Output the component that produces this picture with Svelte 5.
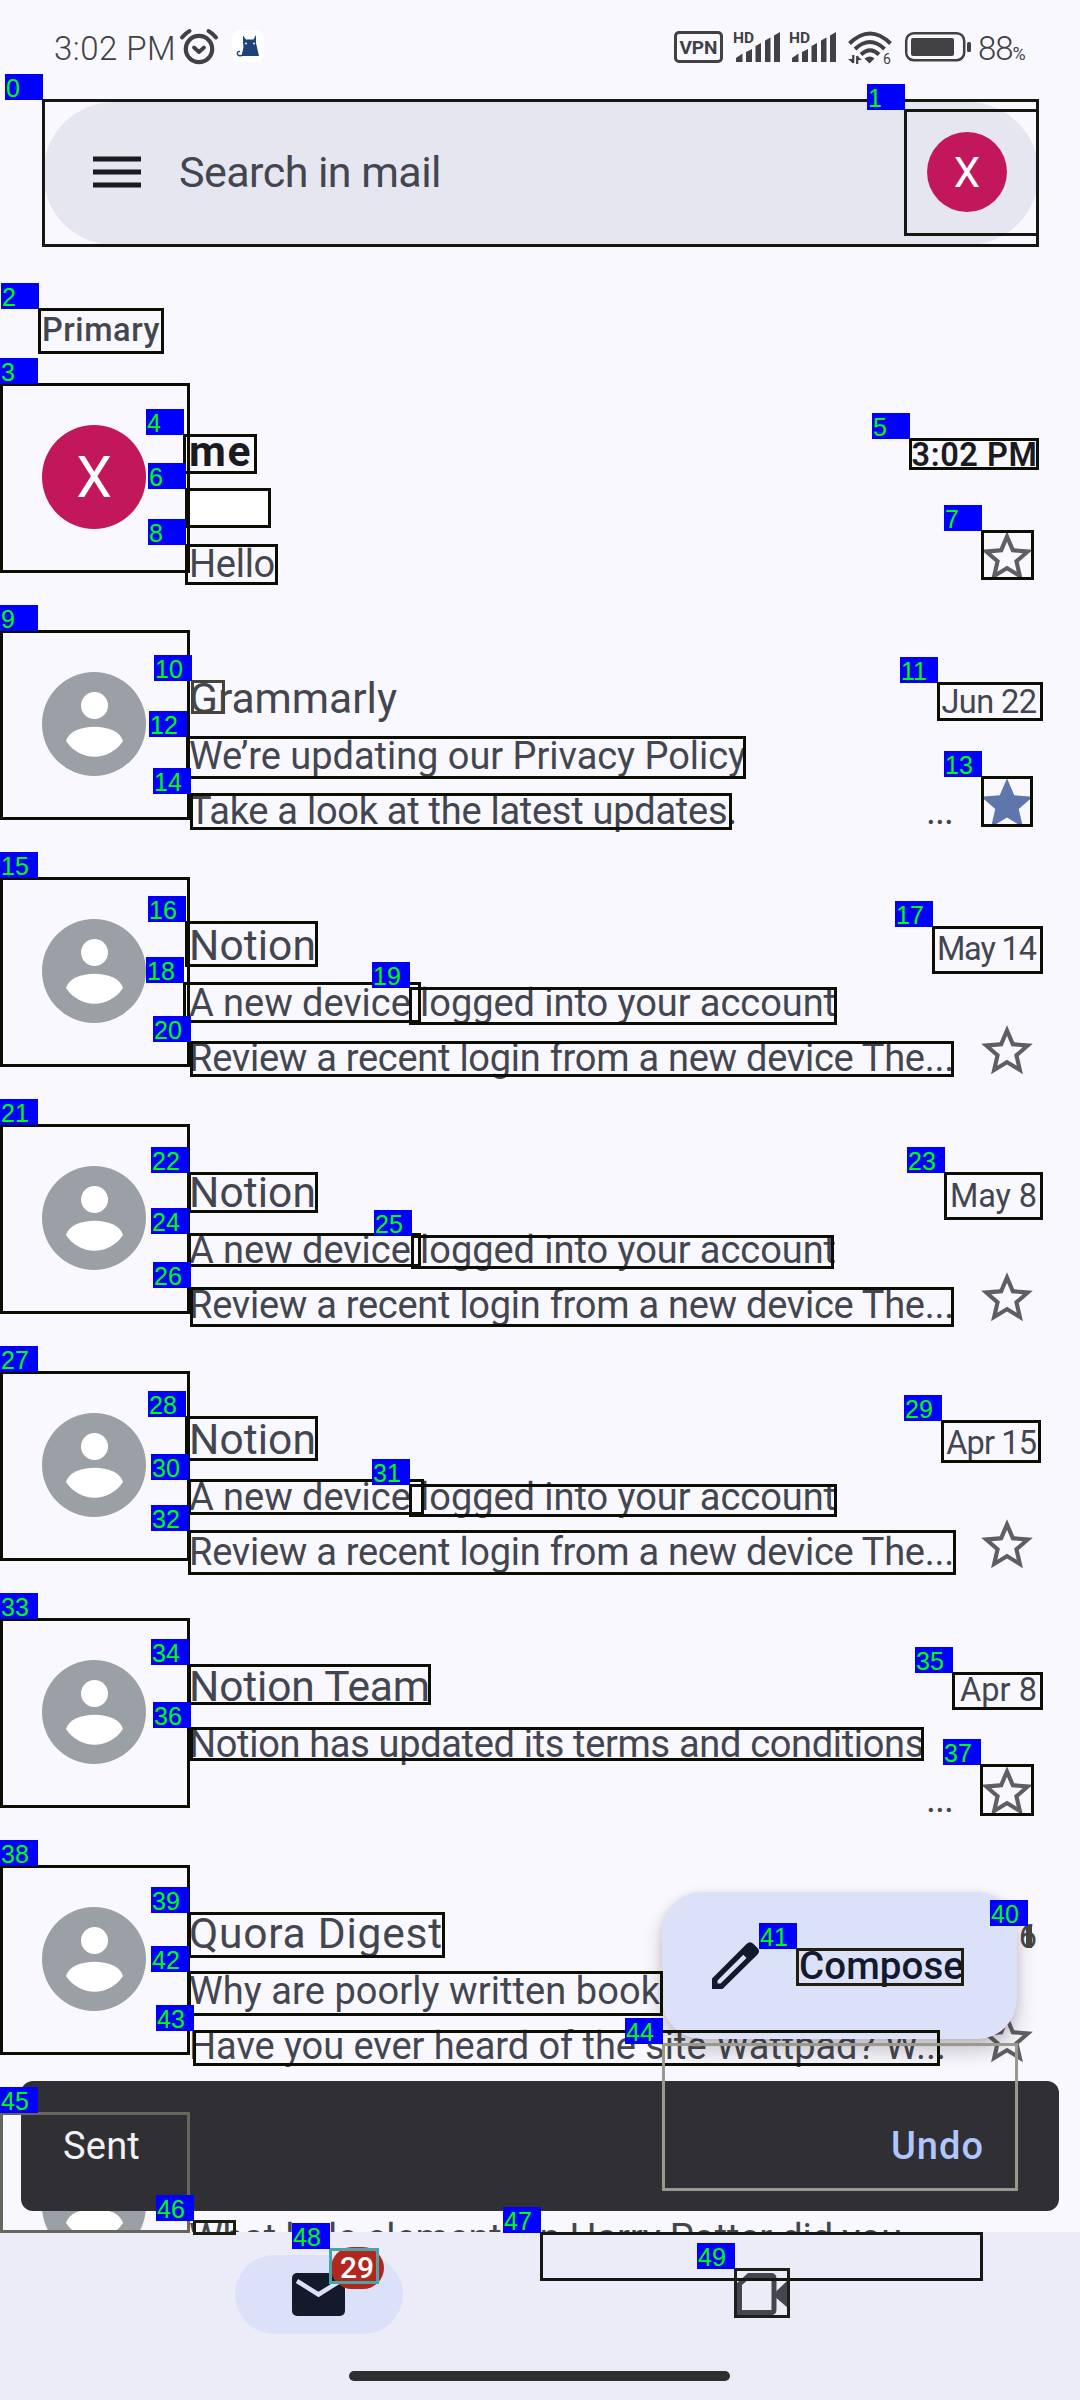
<script>
  // Spreads a line of text over an exact width by adjusting its tracking.
  function fit(node, width) {
    const natural = node.getBoundingClientRect().width;
    const gap = (width - natural) / [...node.textContent].length;
    node.style.letterSpacing = `${gap}px`;
    node.style.marginRight = `${-gap}px`;
  }

  const login = {
    from: 'Notion', fromW: 127,
    subject: 'A new device logged into your account', subjectW: 647,
    snippet: 'Review a recent login from a new device The...', snippetW: 765,
  };

  const mails = [
    { from: 'me', fromW: 63, letter: 'X', unread: true, date: '3:02 PM', dateW: 126, subject: '', snippet: 'Hello', snippetW: 86 },
    {
      from: 'Grammarly', fromW: 208, date: 'Jun 22', dateW: 95, starred: true, more: true,
      subject: 'We’re updating our Privacy Policy', subjectW: 557,
      snippet: 'Take a look at the latest updates.', snippetW: 548,
    },
    { ...login, date: 'May 14', dateW: 99 },
    { ...login, date: 'May 8', dateW: 87 },
    { ...login, date: 'Apr 15', dateW: 90 },
    {
      from: 'Notion Team', fromW: 241, date: 'Apr 8', dateW: 77, more: true,
      subject: 'Notion has updated its terms and conditions', subjectW: 735, snippet: '', snippetW: 0,
    },
    {
      from: 'Quora Digest', fromW: 254, date: 'Apr 6', dateW: 77,
      subject: 'Why are poorly written book', subjectW: 471,
      snippet: 'Have you ever heard of the site Wattpad? W...', snippetW: 757,
    },
    {
      from: '', fromW: 0, date: '', dateW: 0,
      subject: 'What little elements in Harry Potter did you', subjectW: 713, snippet: '', snippetW: 0,
    },
  ];

  // Marks: number, box left, top, right, bottom, colour, and a label origin where it differs.
  const dark = '#0c0e04';
  const marks = [
    [0, 42, 99, 1039, 247, '#141810', 5, 74],
    [1, 904, 109, 1039, 236, '#141810', 867, 84],
    [2, 38, 308, 164, 354],
    [3, 0, 383, 190, 573],
    [4, 183, 434, 257, 474],
    [5, 909, 438, 1039, 470],
    [6, 185, 488, 271, 528],
    [7, 981, 530, 1034, 580],
    [8, 185, 544, 278, 585],
    [9, 0, 630, 190, 820],
    [10, 191, 680, 225, 714, '#44443a'],
    [11, 937, 682, 1043, 721],
    [12, 186, 736, 746, 779],
    [13, 981, 776, 1033, 827],
    [14, 190, 793, 732, 830],
    [15, 0, 877, 190, 1067],
    [16, 185, 921, 318, 967],
    [17, 932, 926, 1043, 974],
    [18, 183, 982, 421, 1023],
    [19, 409, 987, 837, 1025],
    [20, 190, 1041, 954, 1077],
    [21, 0, 1124, 190, 1314],
    [22, 188, 1172, 318, 1213],
    [23, 944, 1172, 1043, 1220],
    [24, 188, 1233, 421, 1267],
    [25, 411, 1235, 834, 1269],
    [26, 190, 1287, 954, 1327],
    [27, 0, 1371, 190, 1561],
    [28, 185, 1416, 318, 1461],
    [29, 941, 1420, 1041, 1463],
    [30, 188, 1479, 424, 1515],
    [31, 409, 1484, 837, 1517],
    [32, 188, 1530, 956, 1575],
    [33, 0, 1618, 190, 1808],
    [34, 188, 1664, 431, 1705],
    [35, 952, 1672, 1043, 1710],
    [36, 190, 1727, 924, 1761],
    [37, 980, 1764, 1034, 1816],
    [38, 0, 1865, 190, 2055],
    [39, 188, 1912, 445, 1958],
    [40, 1026, 1925, 1030, 1948, '#45453b', 990, 1900],
    [41, 796, 1948, 964, 1986, '#241f0b'],
    [42, 188, 1971, 663, 2016],
    [43, 193, 2030, 940, 2066],
    [44, 662, 2043, 1018, 2191, '#99998f'],
    [45, 0, 2112, 190, 2233, '#66665c'],
    [46, 193, 2220, 236, 2235, '#1a1d12'],
    [47, 540, 2232, 983, 2281, '#141812'],
    [48, 329, 2248, 379, 2284, '#4aa3a6'],
    [49, 734, 2268, 790, 2318, '#1c2019'],
  ].map(([n, l, t, r, b, color = dark, lx = Math.max(0, l - 37), ly = t - 25]) => ({
    n, lx, ly, color, l, t, w: r - l, h: b - t,
  }));
</script>

<main class="phone">
  <header class="status">
    <span class="clock"><span class="fit" use:fit={122}>3:02 PM</span></span>
    <svg class="alarm" viewBox="0 0 38 36" fill="none" stroke="#414144" stroke-linecap="round">
      <circle cx="19" cy="20" r="13.2" stroke-width="4.2" />
      <path d="M2 8.500Q5 4.500 9.500 2M36 8.500Q33 4.500 28.500 2" stroke-width="4" />
      <path d="M14 18.500l5 4.500 5-4.500" stroke-width="3.800" stroke-linejoin="round" />
    </svg>
    <svg class="cat" viewBox="0 0 32 32">
      <rect width="32" height="32" rx="8" fill="#fff" />
      <path d="M11 12V5.500l3 4h7.500L24 5v8l3 13H9.500l2-9z" fill="#20427a" />
      <path d="M11 25.300Q5.500 26.500 5.300 23.500Q5.500 21 8 21.500" fill="none" stroke="#20427a" stroke-width="1.500" />
      <circle cx="14" cy="13.500" r="1" fill="#fff" /><circle cx="22" cy="13.500" r="1" fill="#fff" />
    </svg>
    <span class="grow"></span>
    <span class="vpn">VPN</span>
    {#each [0, 1] as sim}
      <span class="signal">
        <svg viewBox="0 0 48 31" fill="#414144">
          <text x="-1" y="10.500" class="hd">HD</text>
          <path d="M2 30v-4l6.500-4.500v8.500zM12 30V20l6-3v13zM21.500 30V14l5.500-3v19zM31 30V8.500l5.500-3v24.500zM40 30V3.500l6-3.500v30z" />
        </svg>
      </span>
    {/each}
    <svg class="wifi" viewBox="0 0 44 33" fill="none" stroke="#414144" stroke-width="4">
      <path d="M1.500 12.500Q22-7.500 42.500 12.500M7 18Q22 4 36.500 18M13 23.500Q22 15 31 23.500" />
      <path d="M16.500 27.500q5.500-4 10 0l-5 5z" fill="#414144" stroke="none" />
      <path d="M5.200 24v8M9.200 33v-8" stroke-width="2.200" />
      <path d="M0 28l5 4.500V28zM14 29l-5-4.500V29z" fill="#414144" stroke="none" />
      <text x="35" y="32.500" class="six">6</text>
    </svg>
    <svg class="battery" viewBox="0 0 66 30">
      <rect x="1.200" y="1.200" width="58" height="27" rx="7.500" fill="none" stroke="#414144" stroke-width="2.500" />
      <rect x="6" y="6" width="43" height="18" rx="2" fill="#414144" />
      <rect x="62" y="10" width="4" height="10" rx="1.500" fill="#414144" />
    </svg>
    <span class="level">88<small>%</small></span>
  </header>

  <div class="search">
    <svg class="menu" viewBox="0 0 48 33" fill="#1b1b1f"><path d="M0 .5h48v5H0zM0 13.500h48v5H0zM0 26.500h48v5H0z" /></svg>
    <span class="hint"><span class="fit" use:fit={262}>Search in mail</span></span>
    <span class="account">X</span>
  </div>

  <h2 class="section"><span class="fit" use:fit={118}>Primary</span></h2>

  <section class="list">
    {#each mails as m}
      <article class="row" class:unread={m.unread}>
        <div class="face">
          {#if m.letter}
            <span class="initial">{m.letter}</span>
          {:else}
            <svg viewBox="0 0 104 104">
              <circle cx="52" cy="52" r="52" fill="#9aa0a6" />
              <circle cx="52.500" cy="33.500" r="13.500" fill="#fff" />
              <path d="M24 69C29 50 76 50 81 69C67 90 38 90 24 69z" fill="#fff" />
            </svg>
          {/if}
        </div>
        <div class="body">
          <div class="from">{#if m.from}<span class="fit" use:fit={m.fromW}>{m.from}</span>{/if}</div>
          <div class="subject">
            {#if m.subject}<span class="fit" use:fit={m.subjectW}>{m.subject}</span>{:else}<span class="blank"></span>{/if}
          </div>
          <div class="snippet">
            <span>{#if m.snippet}<span class="fit" use:fit={m.snippetW}>{m.snippet}</span>{/if}</span>
            {#if m.more}<span class="fit" use:fit={27}>...</span>{/if}
          </div>
        </div>
        <div class="side">
          <div class="date">{#if m.date}<span class="fit" use:fit={m.dateW}>{m.date}</span>{/if}</div>
          <svg class="star" viewBox="0 0 24 24">
            {#if m.starred}
              <path fill="#5f76ad" d="M12 17.270 18.180 21l-1.640-7.030L22 9.240l-7.190-.61L12 2 9.190 8.630 2 9.240l5.460 4.730L5.820 21z" />
            {:else}
              <path fill="#5f5e62" d="M22 9.240l-7.190-.62L12 2 9.190 8.630 2 9.240l5.460 4.730L5.820 21 12 17.270 18.180 21l-1.630-7.030L22 9.240zM12 15.400l-3.760 2.270 1-4.280-3.320-2.880 4.380-.38L12 6.100l1.710 4.040 4.380.38-3.320 2.880 1 4.280L12 15.400z" />
            {/if}
          </svg>
        </div>
      </article>
    {/each}
  </section>

  <nav class="tabs">
    <div class="tab">
      <span class="pill">
        <svg class="mail" viewBox="0 0 53 43">
          <rect width="53" height="43" rx="5" fill="#141a2c" />
          <path d="M5 8l21.500 13.500L48 8" fill="none" stroke="#dce1fa" stroke-width="4.500" />
        </svg>
        <span class="badge">29</span>
      </span>
    </div>
    <div class="tab">
      <svg class="video" viewBox="0 0 51 42">
        <path d="M2.500 11v28.500h31.500q3 0 3-3V5.500q0-3-3-3H12z" fill="none" stroke="#44464f" stroke-width="5" />
        <path d="M37 20.500L51 7v28L37 23z" fill="#44464f" />
      </svg>
    </div>
    <span class="handle"></span>
  </nav>

  <button class="compose">
    <svg viewBox="0 0 47 47">
      <path fill="#141a2c" fill-rule="evenodd" d="M0 36.500L34.500 2q3.500-3.500 7 0l3.800 3.800q3.500 3.500 0 7L10.500 47H0zM5.500 38.500v3h3L34.500 16l-3.200-3.200z" />
    </svg>
    <span class="fit" use:fit={165}>Compose</span>
  </button>

  <div class="snackbar">
    <span class="fit" use:fit={77}>Sent</span>
    <span class="fit undo" use:fit={93}>Undo</span>
  </div>

  <div class="marks">
    {#each marks as m (m.n)}
      <i class="box" style="left:{m.l}px;top:{m.t}px;width:{m.w}px;height:{m.h}px;border-color:{m.color}"></i>
      <b class="tag" style="left:{m.lx}px;top:{m.ly}px">{m.n}</b>
    {/each}
  </div>
</main>

<style>
  :global(body) { margin: 0; background: #f9f8ff; }

  .phone {
    position: relative;
    display: flex;
    flex-direction: column;
    width: 1080px;
    height: 2400px;
    overflow: hidden;
    background: #f9f8ff;
    color: #44464f;
    font-family: Roboto, "Liberation Sans", sans-serif;
    white-space: nowrap;
  }
  .phone * { box-sizing: border-box; }
  .fit { display: inline-block; }
  svg { display: block; flex: none; overflow: visible; }

  .status {
    display: flex;
    align-items: flex-start;
    height: 102px;
    padding: 29px 54px 0 54px;
    color: #414144;
  }
  .clock { width: 126px; font-size: 33px; font-weight: 300; line-height: 40px; }
  .alarm { width: 38px; height: 36px; }
  .cat { width: 32px; height: 32px; margin: 1px 0 0 14px; }
  .grow { flex: 1; }
  .vpn {
    width: 49px;
    height: 32px;
    margin: 2px 11px 0 0;
    border: 3px solid #414144;
    border-radius: 5px;
    font-size: 19px;
    font-weight: 700;
    line-height: 27px;
    text-align: center;
  }
  .signal { width: 56px; padding-top: 3px; }
  .signal svg { width: 48px; height: 31px; }
  .hd { font-size: 15.5px; font-weight: 700; }
  .wifi { width: 44px; height: 33px; margin: 2px 13px 0 2px; }
  .six { font-size: 14px; fill: #414144; stroke: none; }
  .battery { width: 66px; height: 30px; margin: 3px 7px 0 0; }
  .level { width: 48px; font-size: 33px; font-weight: 300; line-height: 40px; letter-spacing: -1px; }
  .level small { font-size: 18px; font-weight: 400; }

  .search {
    display: flex;
    align-items: center;
    height: 143px;
    margin: 0 41px 0 43px;
    padding: 0 32px 3px 50px;
    border-radius: 72px;
    background: #e6e6f1;
  }
  .menu { width: 48px; height: 33px; }
  .hint { flex: 1; padding-left: 38px; font-size: 43px; line-height: 54px; }
  .account {
    width: 80px;
    height: 80px;
    border-radius: 50%;
    background: #c2185b;
    color: #fff;
    font-size: 42px;
    line-height: 81px;
    text-align: center;
  }

  .section {
    height: 138px;
    margin: 0;
    padding: 61px 0 0 42px;
    font-size: 32.5px;
    font-weight: 500;
    line-height: 48px;
  }

  .list { height: 1849px; overflow: hidden; }
  .row { display: grid; grid-template-columns: 189px 765px minmax(0, 1fr); height: 247px; padding: 42px 43px 0 0; }
  .face { padding-left: 42px; }
  .face svg { width: 104px; height: 104px; }
  .initial {
    display: block;
    width: 104px;
    height: 104px;
    border-radius: 50%;
    background: #c2185b;
    color: #fff;
    font-size: 57px;
    line-height: 105px;
    text-align: center;
  }
  .from { height: 54px; font-size: 42.5px; line-height: 54px; }
  .subject { display: flex; height: 60px; font-size: 38px; line-height: 61px; }
  .snippet { display: flex; justify-content: space-between; height: 50px; font-size: 38px; line-height: 51px; }
  .blank { width: 79px; height: 31px; margin-top: 14px; background: #fff; }
  .side { display: flex; flex-direction: column; align-items: flex-end; }
  .date { height: 60px; font-size: 32.5px; line-height: 60px; }
  .star { width: 62px; height: 62px; margin: 41px -1px 0 0; }
  .unread .from, .unread .date { color: #1b1b1f; font-weight: 700; }
  .unread .date { font-weight: 600; }

  .tabs {
    position: relative;
    display: grid;
    grid-template-columns: 440px 440px;
    justify-content: center;
    flex: 1;
    padding-top: 23px;
    background: #ecebf8;
  }
  .tab { display: flex; justify-content: center; }
  .pill {
    position: relative;
    display: flex;
    align-items: flex-start;
    justify-content: center;
    width: 168px;
    height: 79px;
    padding-top: 18px;
    margin-right: 3px;
    border-radius: 40px;
    background: #dce1fa;
  }
  .mail { width: 53px; height: 43px; }
  .badge {
    position: absolute;
    left: 96px;
    top: -8px;
    width: 53px;
    height: 42px;
    border-radius: 21px;
    background: #b3261e;
    color: #fff;
    font-size: 30px;
    font-weight: 500;
    line-height: 42px;
    text-align: center;
  }
  .video { width: 51px; height: 42px; margin: 18px 0 0 4px; }
  .handle {
    position: absolute;
    left: 349px;
    bottom: 19px;
    width: 381px;
    height: 10px;
    border-radius: 5px;
    background: #2e2f31;
  }

  .compose {
    position: absolute;
    left: 662px;
    top: 1892px;
    display: flex;
    align-items: center;
    gap: 40px;
    width: 355px;
    height: 147px;
    padding: 0 0 0 50px;
    border: 0;
    border-radius: 40px;
    background: #dce1fa;
    box-shadow: 0 12px 20px rgba(40, 30, 30, 0.24), 0 2px 8px rgba(40, 30, 30, 0.1);
    color: #141a2c;
    font: 500 38.5px/50px Roboto, sans-serif;
  }
  .compose svg { width: 47px; height: 47px; }

  .snackbar {
    position: absolute;
    left: 21px;
    top: 2081px;
    display: flex;
    align-items: center;
    justify-content: space-between;
    width: 1038px;
    height: 130px;
    padding: 0 76px 0 42px;
    border-radius: 12px;
    background: #303034;
    color: #f2f0f4;
    font-size: 38px;
  }
  .undo { color: #b0c6ff; font-weight: 500; }

  .box, .tag { position: absolute; display: block; }
  .box { border: 3px solid; }
  .tag {
    width: 38px;
    height: 26px;
    padding-left: 1px;
    background: #00f;
    color: #0f0;
    font: 400 25px/28px "Liberation Sans", sans-serif;
  }
</style>
